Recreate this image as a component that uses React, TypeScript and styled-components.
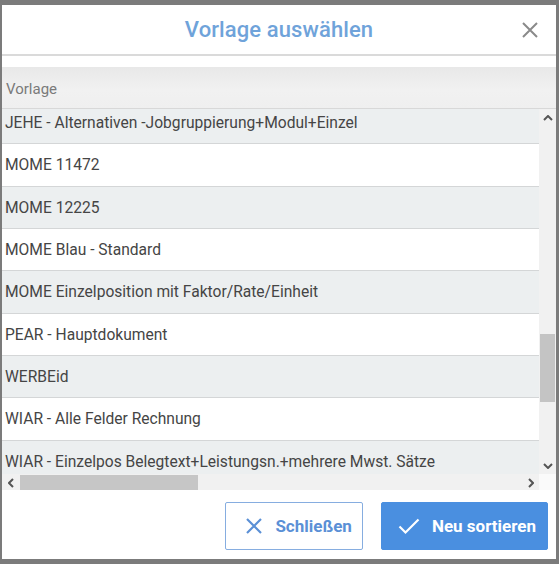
import { useEffect, useRef } from "react";
import styled, { createGlobalStyle } from "styled-components";

const templates = [
  "JEHE - Alternativen -Jobgruppierung+Modul+Einzel",
  "MOME 11472",
  "MOME 12225",
  "MOME Blau - Standard",
  "MOME Einzelposition mit Faktor/Rate/Einheit",
  "PEAR - Hauptdokument",
  "WERBEid",
  "WIAR - Alle Felder Rechnung",
  "WIAR - Einzelpos Belegtext+Leistungsn.+mehrere Mwst. Sätze",
];

function App() {
  const viewportRef = useRef<HTMLDivElement>(null);

  // the list is scrolled a little, the first row is cut off at the top
  useEffect(() => {
    if (viewportRef.current) viewportRef.current.scrollTop = 7;
  }, []);

  return (
    <>
      <GlobalStyle />
      <Page>
        <Dialog>
          <Header>
            <span />
            <Title>Vorlage auswählen</Title>
            <CloseButton aria-label="Schließen">
              <svg width="18" height="18" viewBox="0 0 18 18">
                <path
                  d="M2 2 L16 16 M16 2 L2 16"
                  stroke="#8a8a8a"
                  strokeWidth="2"
                  fill="none"
                />
              </svg>
            </CloseButton>
          </Header>

          <Grid>
            <ColumnHeader>Vorlage</ColumnHeader>
            <Body>
              <Viewport ref={viewportRef}>
                {templates.map((name, i) => (
                  <Row key={name} $odd={i % 2 === 1}>
                    {name}
                  </Row>
                ))}
              </Viewport>
              <VScroll>
                <ScrollArrow>
                  <svg width="10" height="6" viewBox="0 0 10 6">
                    <path d="M1 5 L5 1 L9 5" stroke="#555" strokeWidth="2" fill="none" />
                  </svg>
                </ScrollArrow>
                <VTrack>
                  <VThumb />
                </VTrack>
                <ScrollArrow>
                  <svg width="10" height="6" viewBox="0 0 10 6">
                    <path d="M1 1 L5 5 L9 1" stroke="#555" strokeWidth="2" fill="none" />
                  </svg>
                </ScrollArrow>
              </VScroll>
            </Body>
            <HScroll>
              <ScrollArrow>
                <svg width="6" height="10" viewBox="0 0 6 10">
                  <path d="M5 1 L1 5 L5 9" stroke="#555" strokeWidth="2" fill="none" />
                </svg>
              </ScrollArrow>
              <HTrack>
                <HThumb />
              </HTrack>
              <ScrollArrow>
                <svg width="6" height="10" viewBox="0 0 6 10">
                  <path d="M1 1 L5 5 L1 9" stroke="#555" strokeWidth="2" fill="none" />
                </svg>
              </ScrollArrow>
              <Corner />
            </HScroll>
          </Grid>

          <Footer>
            <Button $variant="outline">
              <svg width="18" height="18" viewBox="0 0 18 18">
                <path
                  d="M2 2 L16 16 M16 2 L2 16"
                  stroke="currentColor"
                  strokeWidth="2.2"
                  fill="none"
                />
              </svg>
              Schließen
            </Button>
            <Button $variant="primary">
              <svg width="22" height="18" viewBox="0 0 22 18">
                <path
                  d="M1.5 9.5 L7.5 15.5 L20.5 2.5"
                  stroke="currentColor"
                  strokeWidth="2.2"
                  fill="none"
                />
              </svg>
              Neu sortieren
            </Button>
          </Footer>
        </Dialog>
      </Page>
    </>
  );
}
export default App;

const GlobalStyle = createGlobalStyle`
  html, body {
    margin: 0;
    padding: 0;
    background: #7b7b7b;
  }
  * {
    box-sizing: border-box;
  }
  body {
    font-family: Roboto, "Liberation Sans", sans-serif;
  }
`;

const Page = styled.div`
  width: 559px;
  height: 564px;
  padding: 5px 3px 5px 2px;
`;

const Dialog = styled.div`
  height: 100%;
  background: #ffffff;
  display: flex;
  flex-direction: column;
`;

const Header = styled.div`
  height: 51px;
  display: grid;
  grid-template-columns: 1fr auto 1fr;
  align-items: center;
  border-bottom: 2px solid #dadada;
  margin-bottom: 11px;
`;

const Title = styled.h2`
  margin: 0;
  font-size: 22px;
  font-weight: 500;
  color: #6fa3da;
  letter-spacing: 0.1px;
`;

const CloseButton = styled.button`
  justify-self: end;
  margin-right: 17px;
  border: none;
  background: transparent;
  padding: 0;
  display: flex;
  cursor: pointer;
`;

const Grid = styled.div`
  display: flex;
  flex-direction: column;
`;

const ColumnHeader = styled.div`
  height: 42px;
  display: flex;
  align-items: center;
  padding: 2px 0 0 4px;
  font-size: 15px;
  color: #7a7a7a;
  background: linear-gradient(#e8e8e8, #f1f1f1 55%, #efefef);
  border-bottom: 1px solid #d8d8d8;
`;

const Body = styled.div`
  height: 365px;
  display: flex;
`;

const Viewport = styled.div`
  flex: 1;
  overflow: hidden;
`;

const Row = styled.div<{ $odd: boolean }>`
  height: 42.33px;
  display: flex;
  align-items: center;
  padding: 1px 0 0 3px;
  font-size: 15.6px;
  color: #454545;
  white-space: nowrap;
  background: ${(p) => (p.$odd ? "#ffffff" : "#eceff0")};
  border-bottom: 1px solid #d4d6d7;
`;

const VScroll = styled.div`
  width: 17px;
  display: flex;
  flex-direction: column;
  background: #f1f1f1;
`;

const ScrollArrow = styled.div`
  width: 17px;
  height: 17px;
  flex: none;
  display: flex;
  align-items: center;
  justify-content: center;
`;

const VTrack = styled.div`
  flex: 1;
  padding-top: 208px;
`;

const VThumb = styled.div`
  height: 68px;
  margin: 0 1px;
  background: #c4c4c4;
`;

const HScroll = styled.div`
  height: 16px;
  display: flex;
  background: #f1f1f1;
`;

const HTrack = styled.div`
  flex: 1;
  display: flex;
  align-items: center;
`;

const HThumb = styled.div`
  width: 178px;
  height: 15px;
  margin-left: 1px;
  background: #c6c6c6;
`;

const Corner = styled.div`
  width: 17px;
  background: #fafafa;
`;

const Footer = styled.div`
  display: flex;
  justify-content: flex-end;
  gap: 18px;
  padding: 12px 8px 0 0;
`;

const Button = styled.button<{ $variant: "outline" | "primary" }>`
  height: 48px;
  display: flex;
  align-items: center;
  gap: 12px;
  padding: ${(p) => (p.$variant === "outline" ? "0 10px 0 19px" : "0 11px 0 16px")};
  font-family: Roboto, "Liberation Sans", sans-serif;
  font-size: 17px;
  font-weight: 700;
  border-radius: 2px;
  cursor: pointer;
  color: ${(p) => (p.$variant === "outline" ? "#5b90d6" : "#ffffff")};
  background: ${(p) => (p.$variant === "outline" ? "#ffffff" : "#4a8fe0")};
  border: 1px solid
    ${(p) => (p.$variant === "outline" ? "#86ade0" : "#4a8fe0")};
`;
